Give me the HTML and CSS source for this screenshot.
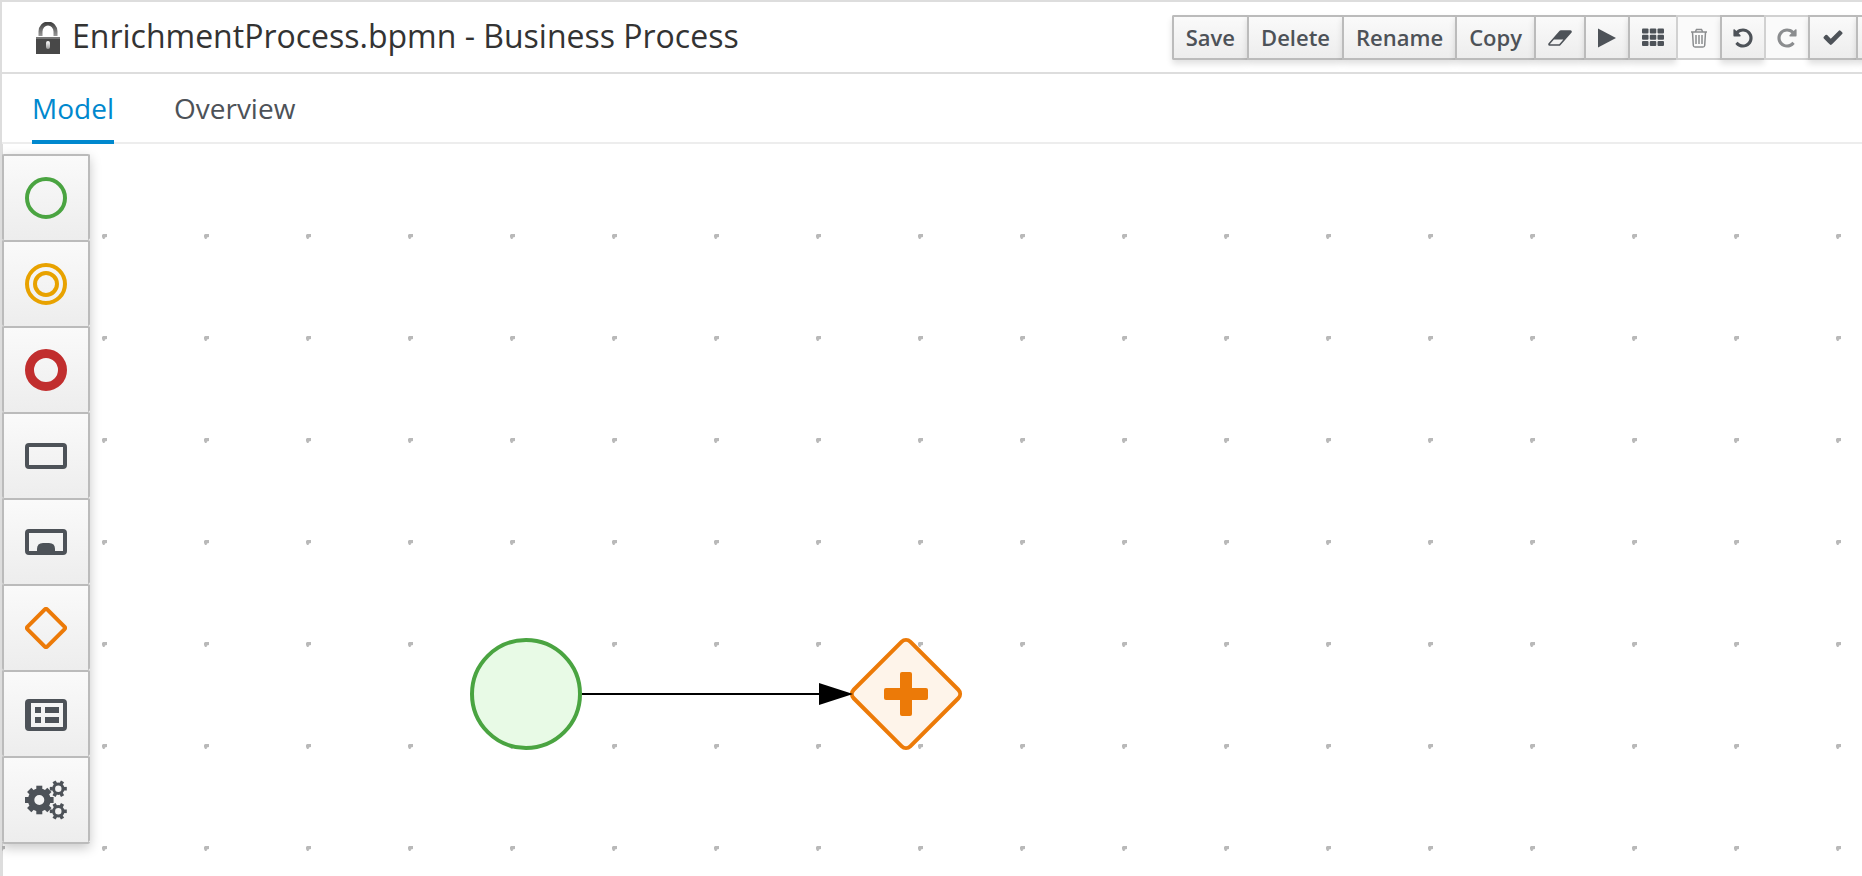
FILE: index.html
```html
<!DOCTYPE html>
<html lang="en">
<head>
<meta charset="utf-8">
<title>EnrichmentProcess.bpmn - Business Process</title>
<link rel="stylesheet" href="styles.css">
</head>
<body>
<div class="editor">
  <header class="header">
    <svg class="lock" viewBox="0 0 26 32" aria-hidden="true">
      <defs>
        <linearGradient id="shackle" x1="0" y1="0" x2="0" y2="1"><stop offset="0" stop-color="#444"/><stop offset="1" stop-color="#999"/></linearGradient>
        <linearGradient id="keyhole" x1="0" y1="0" x2="0" y2="1"><stop offset="0" stop-color="#fff"/><stop offset="1" stop-color="#999"/></linearGradient>
      </defs>
      <path d="M5.500 14V9.500a7.500 8 0 0 1 15 0V14" fill="none" stroke="url(#shackle)" stroke-width="4"/>
      <rect x="1" y="15" width="24" height="17" fill="#484848"/>
      <rect x="1" y="15" width="24" height="2" fill="#777"/>
      <rect x="11" y="19" width="4" height="8" rx="2" fill="url(#keyhole)"/>
    </svg>
    <h1 class="title">EnrichmentProcess.bpmn - Business Process</h1>
    <div class="toolbar" role="toolbar" aria-label="Editor actions">
      <button class="tool text" type="button">Save</button>
      <button class="tool text" type="button">Delete</button>
      <button class="tool text" type="button">Rename</button>
      <button class="tool text" type="button">Copy</button>
      <button class="tool" type="button" aria-label="Clear">
        <svg class="icon wide" viewBox="0 0 2048 1792"><path d="M960 1408l336-384h-768l-336 384h768zm1013-1077q15 34 9.500 71.500t-30.500 65.500l-896 1024q-38 44-96 44h-768q-38 0-69.500-20.500t-47.500-54.500q-15-34-9.500-71.500t30.500-65.500l896-1024q38-44 96-44h768q38 0 69.500 20.500t47.500 54.500z"/></svg>
      </button>
      <button class="tool" type="button" aria-label="Run">
        <svg class="icon narrow" viewBox="0 0 20 22"><path d="M1 1.500L19 11L1 20.500z"/></svg>
      </button>
      <button class="tool" type="button" aria-label="Grid">
        <svg class="icon" viewBox="0 0 24 22"><g id="cells"><rect x="1" y="1.500" width="6.500" height="5" rx="1"/><rect x="8.800" y="1.500" width="6.500" height="5" rx="1"/><rect x="16.500" y="1.500" width="6.500" height="5" rx="1"/></g><use href="#cells" y="6.300"/><use href="#cells" y="12.600"/></svg>
      </button>
      <button class="tool" type="button" aria-label="Delete selection" disabled>
        <svg class="icon narrow" viewBox="0 0 20 22"><path d="M2 5h16M6 5.500L7.500 2.500h5L14 5.500M3.500 5l.8 13.500q.2 1.500 1.700 1.500h8q1.500 0 1.700-1.500L16.500 5M7 8v9M10 8v9M13 8v9" fill="none" stroke="currentColor" stroke-width="1.500"/></svg>
      </button>
      <button class="tool" type="button" aria-label="Undo">
        <svg class="icon narrow" viewBox="-32 64 1600 1664"><path id="undo" d="M1536 896q0 156-61 298t-164 245-245 164-298 61q-172 0-327-72.500t-264-204.500q-7-10-6.500-22.500t8.500-20.500l137-138q10-9 25-9 16 2 23 12 73 95 179 147t225 52q104 0 198.500-40.500t163.500-109.500 109.500-163.500 40.500-198.500-40.500-198.500-109.500-163.500-163.500-109.500-198.500-40.500q-98 0-188 35.500t-160 101.500l137 138q31 30 14 69-17 40-59 40h-448q-26 0-45-19t-19-45v-448q0-42 40-59 39-17 69 14l130 129q107-101 244.500-156.500t284.500-55.500q156 0 298 61t245 164 164 245 61 298z"/></svg>
      </button>
      <button class="tool" type="button" aria-label="Redo" disabled>
        <svg class="icon narrow" viewBox="-32 64 1600 1664"><use href="#undo" transform="translate(1536 0) scale(-1 1)"/></svg>
      </button>
      <button class="tool" type="button" aria-label="Validate">
        <svg class="icon" viewBox="0 64 1792 1792"><path d="M1671 566q0 40-28 68l-724 724-136 136q-28 28-68 28t-68-28l-136-136-362-362q-28-28-28-68t28-68l136-136q28-28 68-28t68 28l294 295 656-657q28-28 68-28t68 28l136 136q28 28 28 68z"/></svg>
      </button>
      <button class="tool" type="button" aria-label="More"><span class="icon"></span></button>
    </div>
  </header>

  <nav class="tabs">
    <a class="tab active" href="#model" aria-current="page">Model</a>
    <a class="tab" href="#overview">Overview</a>
  </nav>

  <main class="canvas">
    <svg class="diagram" role="img" aria-label="Process diagram">
      <defs>
        <pattern id="grid" x="-10" y="80" width="102" height="102" patternUnits="userSpaceOnUse">
          <path d="M9 10h4v3l-2 .5-.5 1.500H9l-1-2v-2z" fill="#b9b9b9"/>
        </pattern>
      </defs>
      <rect width="100%" height="100%" fill="url(#grid)"/>
      <circle cx="524" cy="550" r="54" fill="#e8fae6" stroke="#4aa441" stroke-width="4"/>
      <path d="M580 550h240" stroke="#000" stroke-width="2"/>
      <rect x="864" y="510" width="80" height="80" rx="6" transform="rotate(45 904 550)" fill="#fef4ea" stroke="#ec7a08" stroke-width="4"/>
      <path d="M817 539l34 11-34 11z"/>
      <rect x="882" y="544" width="44" height="12" rx="2" fill="#ec7a08"/>
      <rect x="898" y="528" width="12" height="44" rx="2" fill="#ec7a08"/>
    </svg>

    <div class="palette" role="toolbar" aria-label="Palette" aria-orientation="vertical">
      <button class="shape" type="button" aria-label="Start events">
        <svg viewBox="0 0 42 42"><circle cx="21" cy="21" r="19" fill="none" stroke="#4aa441" stroke-width="4"/></svg>
      </button>
      <button class="shape" type="button" aria-label="Intermediate events">
        <svg viewBox="0 0 42 42" fill="none" stroke="#e8a200" stroke-width="4"><circle cx="21" cy="21" r="19"/><circle cx="21" cy="21" r="11"/></svg>
      </button>
      <button class="shape" type="button" aria-label="End events">
        <svg viewBox="0 0 42 42"><circle cx="21" cy="21" r="16.500" fill="none" stroke="#c12e2e" stroke-width="9"/></svg>
      </button>
      <button class="shape" type="button" aria-label="Tasks">
        <svg viewBox="0 0 42 42"><rect x="2" y="10" width="38" height="22" rx="2" fill="none" stroke="#4d5258" stroke-width="4"/></svg>
      </button>
      <button class="shape" type="button" aria-label="Subprocesses">
        <svg viewBox="0 0 42 42"><rect x="2" y="10" width="38" height="22" rx="2" fill="none" stroke="#4d5258" stroke-width="4"/><path d="M12 32v-4q0-6 6-6h6q6 0 6 6v4z" fill="#4d5258"/></svg>
      </button>
      <button class="shape" type="button" aria-label="Gateways">
        <svg viewBox="0 0 42 42"><rect x="7" y="7" width="28" height="28" rx="2" transform="rotate(45 21 21)" fill="none" stroke="#ec7a08" stroke-width="4"/></svg>
      </button>
      <button class="shape" type="button" aria-label="Containers">
        <svg viewBox="0 0 42 42" fill="#4d5258"><path fill-rule="evenodd" d="M4 6h34q4 0 4 4v24q0 4-4 4H4q-4 0-4-4V10q0-4 4-4zM6 10v24h32V10z"/><path d="M10 14h6v6h-6zM20 14h14v6H20zM10 24h6v6h-6zM20 24h14v6H20z"/></svg>
      </button>
      <button class="shape" type="button" aria-label="Service tasks">
        <svg viewBox="0 0 42 42" fill="#4d5258">
          <defs>
            <g id="small-gear">
              <circle r="4.700" fill="none" stroke="#4d5258" stroke-width="3"/>
              <path id="small-tooth" d="M5.500-1.800h3v3.600h-3z"/>
              <use href="#small-tooth" transform="rotate(60)"/><use href="#small-tooth" transform="rotate(120)"/><use href="#small-tooth" transform="rotate(180)"/><use href="#small-tooth" transform="rotate(240)"/><use href="#small-tooth" transform="rotate(300)"/>
            </g>
          </defs>
          <g transform="translate(14.300 21)">
            <circle r="8.200" fill="none" stroke="#4d5258" stroke-width="6.400"/>
            <path id="big-tooth" d="M10-3h4.300v6H10z"/>
            <use href="#big-tooth" transform="rotate(45)"/><use href="#big-tooth" transform="rotate(90)"/><use href="#big-tooth" transform="rotate(135)"/><use href="#big-tooth" transform="rotate(180)"/><use href="#big-tooth" transform="rotate(225)"/><use href="#big-tooth" transform="rotate(270)"/><use href="#big-tooth" transform="rotate(315)"/>
          </g>
          <use href="#small-gear" transform="translate(33.300 9.700)"/>
          <use href="#small-gear" transform="translate(33.300 32.300)"/>
        </svg>
      </button>
    </div>
  </main>
</div>
</body>
</html>
```
FILE: styles.css
```css
* {
  box-sizing: border-box;
}

body {
  margin: 0;
  background: #fff;
  color: #333;
  font-family: "Open Sans", "Noto Sans", sans-serif;
}

.editor {
  display: flex;
  flex-direction: column;
  height: 100vh;
  overflow: hidden;
  border-top: 2px solid #ddd;
  border-left: 2px solid #ddd;
}

.header {
  display: flex;
  flex: none;
  align-items: center;
  height: 72px;
  padding: 0 0 2px 33px;
  border-bottom: 2px solid #ddd;
}

.lock {
  flex: none;
  width: 26px;
  height: 32px;
  margin-top: 4px;
}

.title {
  flex: 1;
  margin: 0 0 0 11px;
  font-size: 32px;
  font-weight: 400;
  line-height: 44px;
  white-space: nowrap;
}

.toolbar {
  display: flex;
  flex: none;
  margin: 3px -42px 0 0;
}

.tool {
  display: flex;
  align-items: center;
  justify-content: center;
  height: 45px;
  margin: 0;
  padding: 0 11px;
  border: 2px solid #bbb;
  border-right: 0;
  background: linear-gradient(#fafafa, #ededed);
  box-shadow: 0 4px 6px rgba(3, 3, 3, 0.12);
  color: #4d5258;
  font: 600 22px/30px "Open Sans", "Noto Sans", sans-serif;
}

.tool.text {
  padding: 0 12px 2px;
}

.tool:first-child {
  border-radius: 2px 0 0 2px;
}

.tool:disabled {
  border-color: #d1d1d1;
  background: #fafafa;
  box-shadow: none;
  color: #8b8d8f;
}

.icon {
  display: block;
  width: 24px;
  height: 22px;
  fill: currentColor;
}

.icon.wide {
  width: 26px;
}

.icon.narrow {
  width: 20px;
}

.tabs {
  display: flex;
  flex: none;
  gap: 60px;
  height: 70px;
  padding-left: 30px;
  border-bottom: 2px solid #ededed;
}

.tab {
  height: 70px;
  padding-top: 14px;
  color: #4d5258;
  font-size: 28px;
  line-height: 40px;
  text-decoration: none;
}

.tab.active {
  border-bottom: 4px solid #0088ce;
  color: #0088ce;
}

.canvas {
  position: relative;
  flex: 1;
  min-height: 0;
  box-shadow: inset 1px 0 #ddd;
}

.diagram {
  display: block;
  width: 100%;
  height: 100%;
}

.palette {
  position: absolute;
  top: 10px;
  left: 0;
  display: flex;
  flex-direction: column;
  border-bottom: 2px solid #bbb;
  border-radius: 2px;
  box-shadow: 0 4px 12px rgba(3, 3, 3, 0.22);
}

.shape {
  display: flex;
  align-items: center;
  justify-content: center;
  width: 88px;
  height: 86px;
  margin: 0;
  padding: 0;
  border: 2px solid #bbb;
  border-bottom: 0;
  border-radius: 2px;
  background: linear-gradient(#fafafa, #ededed);
}

.shape svg {
  width: 42px;
  height: 42px;
}
```
